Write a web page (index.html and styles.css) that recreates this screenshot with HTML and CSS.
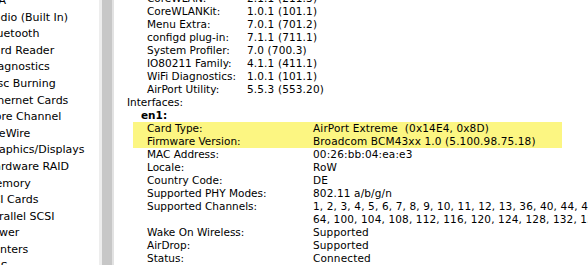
FILE: index.html
```html
<!DOCTYPE html>
<html>
<head>
<meta charset="utf-8">
<link rel="stylesheet" href="styles.css">
</head>
<body>
<div class="window">
  <div class="sidebar">
    <ul class="list">
      <li>ATA</li>
      <li>Audio (Built In)</li>
      <li>Bluetooth</li>
      <li>Card Reader</li>
      <li>Diagnostics</li>
      <li>Disc Burning</li>
      <li>Ethernet Cards</li>
      <li>Fibre Channel</li>
      <li>FireWire</li>
      <li>Graphics/Displays</li>
      <li>Hardware RAID</li>
      <li>Memory</li>
      <li>PCI Cards</li>
      <li>Parallel SCSI</li>
      <li>Power</li>
      <li>Printers</li>
      <li>SAS</li>
    </ul>
  </div>
  <div class="scrollbar"><div class="track"></div></div>
  <div class="content">
    <div class="versions">
      <div class="row"><span class="k">CoreWLAN:</span><span class="v">2.1.1 (211.3)</span></div>
      <div class="row"><span class="k">CoreWLANKit:</span><span class="v">1.0.1 (101.1)</span></div>
      <div class="row"><span class="k">Menu Extra:</span><span class="v">7.0.1 (701.2)</span></div>
      <div class="row"><span class="k">configd plug-in:</span><span class="v">7.1.1 (711.1)</span></div>
      <div class="row"><span class="k">System Profiler:</span><span class="v">7.0 (700.3)</span></div>
      <div class="row"><span class="k">IO80211 Family:</span><span class="v">4.1.1 (411.1)</span></div>
      <div class="row"><span class="k">WiFi Diagnostics:</span><span class="v">1.0.1 (101.1)</span></div>
      <div class="row"><span class="k">AirPort Utility:</span><span class="v">5.5.3 (553.20)</span></div>
    </div>
    <div class="section">Interfaces:</div>
    <div class="iface">
      <div class="ifname">en1:</div>
      <div class="highlight">
        <div class="row wide"><span class="k">Card Type:</span><span class="v">AirPort Extreme  (0x14E4, 0x8D)</span></div>
        <div class="row wide"><span class="k">Firmware Version:</span><span class="v">Broadcom BCM43xx 1.0 (5.100.98.75.18)</span></div>
      </div>
      <div class="plain">
        <div class="row wide"><span class="k">MAC Address:</span><span class="v">00:26:bb:04:ea:e3</span></div>
        <div class="row wide"><span class="k">Locale:</span><span class="v">RoW</span></div>
        <div class="row wide"><span class="k">Country Code:</span><span class="v">DE</span></div>
        <div class="row wide"><span class="k">Supported PHY Modes:</span><span class="v">802.11 a/b/g/n</span></div>
        <div class="row wide"><span class="k">Supported Channels:</span><span class="v">1, 2, 3, 4, 5, 6, 7, 8, 9, 10, 11, 12, 13, 36, 40, 44, 48, 52, 56, 60,
64, 100, 104, 108, 112, 116, 120, 124, 128, 132, 136, 140</span></div>
        <div class="row wide"><span class="k">Wake On Wireless:</span><span class="v">Supported</span></div>
        <div class="row wide"><span class="k">AirDrop:</span><span class="v">Supported</span></div>
        <div class="row wide"><span class="k">Status:</span><span class="v">Connected</span></div>
      </div>
    </div>
  </div>
</div>
</body>
</html>
```
FILE: styles.css
```css
html, body {
  margin: 0;
  padding: 0;
  background: #fff;
  width: 588px;
  height: 265px;
  overflow: hidden;
}
.window {
  display: flex;
  height: 265px;
  font-family: "DejaVu Sans", sans-serif;
  color: #000;
}
.sidebar {
  width: 99px;
  flex: none;
  overflow: hidden;
}
.list {
  list-style: none;
  margin: -7px 0 0 -14px;
  padding: 0;
  font-size: 11px;
  line-height: 16.6px;
  white-space: nowrap;
}
.scrollbar {
  width: 15px;
  flex: none;
  display: flex;
  background: #fff;
}
.track {
  flex: 1;
  border-left: 3px solid #ededed;
  border-right: 2px solid #e2e2e2;
  background: #c7c7c7;
}
.content {
  flex: 1;
  min-width: 0;
  overflow: hidden;
  padding-left: 13px;
  margin-top: -8px;
  font-size: 10.5px;
  line-height: 13px;
  white-space: nowrap;
}
.v {
  white-space: pre;
  letter-spacing: 0.14px;
}
.versions {
  padding-left: 20px;
}
.row {
  display: grid;
  grid-template-columns: 100px auto;
}
.row.wide {
  grid-template-columns: 166px auto;
}
.iface {
  padding-left: 6px;
}
.ifname {
  padding-left: 8px;
  font-weight: bold;
}
.highlight {
  width: 429px;
  background: #fcf682;
  padding-left: 14px;
  box-sizing: border-box;
}
.plain {
  padding-left: 14px;
}
```
